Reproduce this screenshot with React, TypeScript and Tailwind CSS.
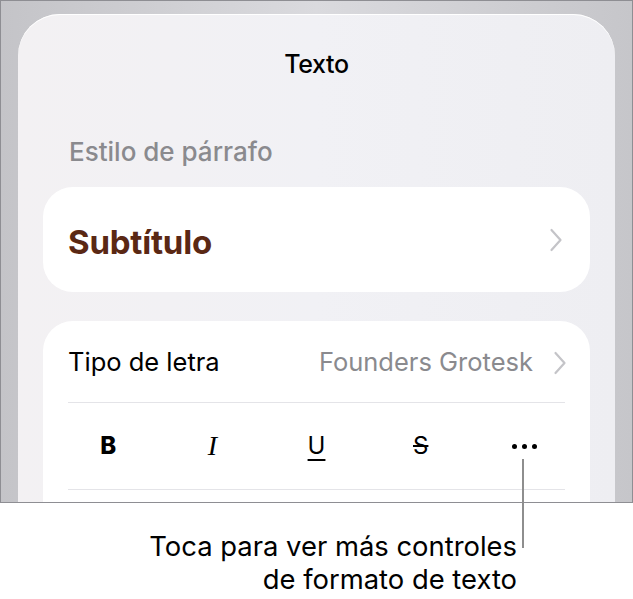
import React from "react";

function Chevron({ className }: { className?: string }) {
  return (
    <svg viewBox="0 0 14 24" className={className} fill="none">
      <path d="M2.5 2l9 10-9 10" stroke="#c4c4c8" strokeWidth="2.2" strokeLinecap="round" strokeLinejoin="round" />
    </svg>
  );
}

function FormatRow() {
  return (
    <div className="flex h-[86px] items-center px-[13px] text-black">
      <div className="flex flex-1 justify-center text-[24px] font-extrabold">B</div>
      <div className="flex flex-1 justify-center text-[28px] italic" style={{ fontFamily: '"Liberation Serif", serif' }}>
        I
      </div>
      <div className="flex flex-1 justify-center text-[24px] underline decoration-[1.5px] underline-offset-[5px]">U</div>
      <div className="flex flex-1 justify-center text-[24px] line-through decoration-[1.5px]">S</div>
      <div className="flex flex-1 justify-center">
        <div className="flex gap-[5px]">
          <span className="h-[5px] w-[5px] rounded-full bg-black" />
          <span className="h-[5px] w-[5px] rounded-full bg-black" />
          <span className="h-[5px] w-[5px] rounded-full bg-black" />
        </div>
      </div>
    </div>
  );
}

export default function App() {
  return (
    <div className="relative h-[599px] w-[633px] overflow-hidden bg-white" style={{ fontFamily: 'Inter, "Noto Sans", sans-serif' }}>
      <div className="h-[503px] overflow-hidden border border-[#8e8e93] bg-gradient-to-r from-[#c4c4c8] via-[#dadade] to-[#c6c6ca] px-[17px] pt-[13px]">
        <div className="h-full rounded-t-[42px] bg-gradient-to-r from-[#f3f1f3] via-[#f1f1f5] to-[#eeeef2] shadow-[inset_0_1px_0_#ffffff]">
          <div className="pt-[36px] text-center text-[25px] font-medium leading-[28px] tracking-[-0.3px] text-black">Texto</div>
          <div className="pl-[51px] pt-[59px] text-[26px] font-medium leading-[30px] text-[#8a8a8e]">Estilo de párrafo</div>
          <div className="mx-[25px] mt-[20px] flex h-[105px] items-center justify-between rounded-[30px] bg-white pl-[25px] pr-[27px]">
            <span className="pt-[4px] text-[33px] font-bold leading-[36px] tracking-[-0.2px] text-[#5a2814]">Subtítulo</span>
            <Chevron className="h-[24px] w-[14px]" />
          </div>
          <div className="mx-[25px] mt-[29px] h-[200px] rounded-t-[30px] bg-white">
            <div className="ml-[25px] mr-[25px] flex h-[82px] items-center justify-between border-b border-[#e4e4e8] pt-[2px]">
              <span className="text-[25.5px] text-black">Tipo de letra</span>
              <div className="-mr-[2px] flex items-center gap-[20px]">
                <span className="text-[25.5px] text-[#8a8a8e]">Founders Grotesk</span>
                <Chevron className="h-[24px] w-[14px]" />
              </div>
            </div>
            <FormatRow />
            <div className="mx-[25px] border-t border-[#e4e4e8]" />
          </div>
        </div>
      </div>
      <div className="absolute left-[522px] top-[459px] h-[89px] w-[2px] bg-[#8e8e8e]" />
      <div className="pr-[116px] pt-[27px] text-right text-[27.4px] leading-[33px] text-black">
        <div>Toca para ver más controles</div>
        <div>de formato de texto</div>
      </div>
    </div>
  );
}
